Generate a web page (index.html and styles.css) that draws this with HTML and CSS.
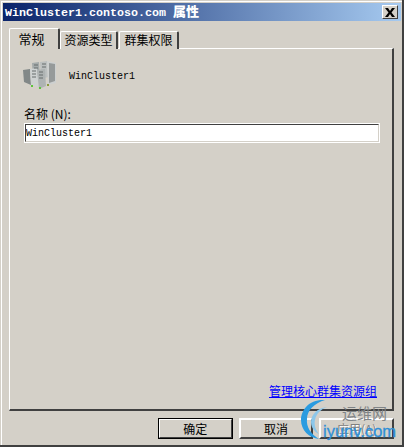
FILE: index.html
```html
<!DOCTYPE html>
<html lang="zh-CN">
<head>
    <meta charset="UTF-8">
    <title>WinCluster1.contoso.com 属性</title>
    <link rel="stylesheet" href="styles.css">
</head>
<body>
    <div class="dialog">
        <div class="titlebar">
            <span class="title">WinCluster1.contoso.com <b>属性</b></span>
            <button class="close" aria-label="关闭">
                <svg width="10" height="9" viewBox="0 0 10 9"><path d="M0 0h3l2 3 2-3h3L6.500 4.500 10 9H7L5 6 3 9H0l3.500-4.500z" fill="#000"/></svg>
            </button>
        </div>
        <div class="tabs">
            <div class="tab active">常规</div>
            <div class="tab tab-types">资源类型</div>
            <div class="tab tab-perms">群集权限</div>
        </div>
        <div class="panel">
            <div class="summary">
                <svg class="cluster-icon" width="34" height="30" viewBox="0 0 34 30">
                    <path d="M9 2l7-1 1 17-7 1z" fill="#a4aaaa"/>
                    <path d="M17 1l7-1 1 16-7 2z" fill="#bcc0c0"/>
                    <path d="M24 0l9 2v20l-8 2z" fill="#cdd0d0"/>
                    <path d="M26 2l6 1v17l-6 2z" fill="#969a9a"/>
                    <path d="M0 9l7-1 1 16-7-3z" fill="#828888"/>
                    <path d="M7 8l7-1 2 19-8-2z" fill="#ced2d2"/>
                    <path d="M14 9l8-1 1 17-7 3z" fill="#aeb3b3"/>
                    <path d="M9 10h4M9 13h4M9 16h4M16 11h4M16 14h4M16 17h4M19 3h4M19 6h4M11 4h4M11 7h4" stroke="#666c6c" stroke-width="1"/>
                    <rect x="8" y="24" width="2" height="2" fill="#5cc43c"/>
                    <rect x="16" y="26" width="2" height="2" fill="#5cc43c"/>
                    <rect x="24" y="23" width="2" height="2" fill="#8a9a3c"/>
                </svg>
                <span class="mono">WinCluster1</span>
            </div>
            <label class="field-label">名称 (N):</label>
            <input class="name-input" type="text" value="WinCluster1">
            <div class="link-row"><a href="#">管理核心群集资源组</a></div>
        </div>
        <div class="buttons">
            <button class="btn default">确定</button>
            <button class="btn">取消</button>
            <button class="btn disabled">应用(A)</button>
        </div>
    </div>

    <div class="watermark">
        <svg width="30" height="44" viewBox="0 0 30 44">
            <path d="M26 2C10 1 2 12 2 22c0 10 8 18 18 19-8-5-13-12-12-20C8 12 16 5 26 2z" fill="#2a9be0"/>
            <path d="M28 9c-10 1-16 8-16 15 0 6 4 10 8 12-4-5-5-10-4-14 1-6 6-11 12-13z" fill="#8cc7ea"/>
        </svg>
        <span class="wm-cn">运维网</span>
        <span class="wm-en">iyunv.com</span>
    </div>
</body>
</html>
```

FILE: styles.css
```css
html, body {
    margin: 0;
    height: 100%;
}
body {
    font-family: "Noto Sans CJK SC", "Liberation Sans", sans-serif;
    font-size: 12px;
    color: #000;
    background-color: #d4d0c8;
    overflow: hidden;
}
.dialog {
    box-sizing: border-box;
    height: 447px;
    padding: 3px 1px 0 3px;
    display: flex;
    flex-direction: column;
    background-color: #d4d0c8;
    border-right: 2px solid #404040;
    border-bottom: 2px solid #404040;
    box-shadow: inset 1px 1px 0 #d4d0c8, inset 2px 2px 0 #fff;
}
.mono {
    font-family: "Liberation Mono", monospace;
    font-size: 10px;
}
.titlebar {
    height: 18px;
    flex: none;
    display: flex;
    align-items: center;
    justify-content: space-between;
    padding: 0 3px 0 2px;
    background: linear-gradient(to right, #0a246a, #a6caf0);
    color: white;
}
.title {
    font-family: "Liberation Mono", monospace;
    font-size: 11.670px;
    font-weight: bold;
    white-space: pre;
    line-height: 16px;
}
.title b {
    font-family: "Noto Sans CJK SC", sans-serif;
    font-size: 13px;
}
.close {
    box-sizing: border-box;
    width: 16px;
    height: 14px;
    padding: 0;
    display: flex;
    align-items: center;
    justify-content: center;
    background-color: #d4d0c8;
    border: 1px solid;
    border-color: #fff #404040 #404040 #fff;
}
.tabs {
    display: flex;
    height: 21px;
    flex: none;
    margin-top: 7px;
    margin-bottom: -1px;
    padding-left: 6px;
    align-items: flex-end;
    position: relative;
    z-index: 1;
}
.tab {
    box-sizing: border-box;
    height: 18px;
    line-height: 16px;
    text-align: center;
    white-space: nowrap;
    background-color: #d4d0c8;
    border: 1px solid #fff;
    border-bottom: none;
    border-right: 2px solid #404040;
    border-radius: 2px 2px 0 0;
}
.tab.active {
    width: 51px;
    height: 21px;
    padding-right: 5px;
    line-height: 19px;
    font-size: 13px;
}
.tab-types {
    width: 58px;
}
.tab-perms {
    width: 60px;
    margin-left: 1px;
}
.panel {
    box-sizing: border-box;
    height: 363px;
    flex: none;
    margin: 0 7px 0 6px;
    padding: 12px 14px 0 14px;
    display: flex;
    flex-direction: column;
    border: 1px solid #fff;
    border-right: 2px solid #404040;
    border-bottom: 2px solid #404040;
}
.summary {
    display: flex;
    align-items: center;
    gap: 12px;
    height: 30px;
    margin-left: -1px;
}
.cluster-icon {
    flex: none;
}
.field-label {
    margin-top: 15px;
    line-height: 16px;
    font-size: 12px;
}
.name-input {
    box-sizing: border-box;
    width: 356px;
    height: 20px;
    margin-top: 1px;
    padding: 0;
    font-family: "Liberation Mono", monospace;
    font-size: 10px;
    background-color: white;
    border: 2px solid;
    border-color: #404040 #d4d0c8 #d4d0c8 #404040;
    outline: 1px solid #fff;
    outline-offset: -1px;
    border-radius: 0;
}
.link-row {
    margin-top: auto;
    padding-bottom: 10px;
    padding-right: 1px;
    text-align: right;
    line-height: 16px;
}
.link-row a {
    color: #0000ff;
    font-size: 12px;
}
.buttons {
    display: flex;
    padding: 7px 7px 0 155px;
    gap: 6px;
}
.btn {
    box-sizing: border-box;
    width: 75px;
    height: 21px;
    padding: 0;
    font-family: inherit;
    font-size: 12px;
    line-height: 16px;
    background-color: #d4d0c8;
    border: 2px solid;
    border-color: #fff #404040 #404040 #fff;
}
.btn.default {
    outline: 1px solid #000;
    outline-offset: -1px;
}
.btn.disabled {
    color: #808080;
    text-shadow: 1px 1px 0 #fff;
}
.watermark {
    position: absolute;
    left: 299px;
    top: 398px;
    width: 105px;
    height: 49px;
}
.watermark svg {
    position: absolute;
    left: 0;
    top: 0;
}
.wm-cn {
    position: absolute;
    left: 43px;
    top: 6px;
    font-size: 15px;
    line-height: 18px;
    color: #808487;
}
.wm-en {
    position: absolute;
    left: 24px;
    top: 24px;
    font-family: "Liberation Sans", sans-serif;
    font-size: 16.500px;
    line-height: 18px;
    color: #2f8fd6;
    -webkit-text-stroke: 0.3px #2f8fd6;
    white-space: nowrap;
}
```
